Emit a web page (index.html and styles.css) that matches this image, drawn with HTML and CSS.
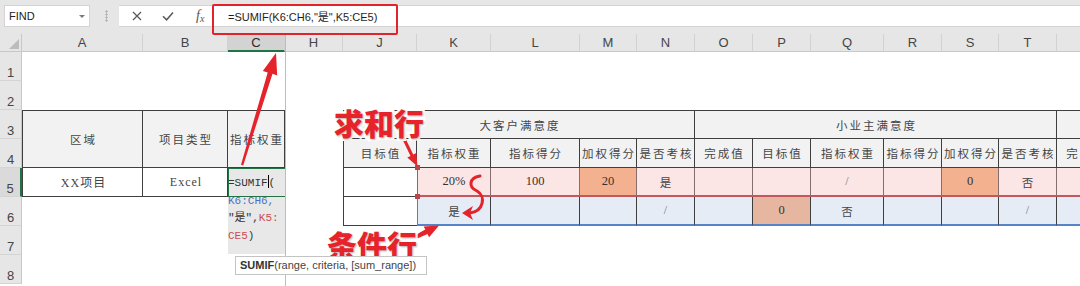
FILE: index.html
```html
<!DOCTYPE html>
<html lang="zh">
<head>
<meta charset="utf-8">
<title>SUMIF</title>
<link rel="stylesheet" href="styles.css">
</head>
<body>
<div class="app">
  <div class="fbar">
    <div class="namebox"><span>FIND</span><span class="dd"></span></div>
    <div class="grip"></div>
    <div class="finput">
      <svg class="ic-x" width="10" height="10" viewBox="0 0 10 10"><path d="M1 1L9 9M9 1L1 9" stroke="#5a5a5a" stroke-width="1.3" fill="none"/></svg>
      <svg class="ic-ok" width="12" height="10" viewBox="0 0 12 10"><path d="M1 5.2L4.6 8.8L11 1.4" fill="none" stroke="#5a5a5a" stroke-width="1.5"/></svg>
      <span class="fx">f<span class="fxx">x</span></span>
      <span class="ftext">=SUMIF(K6:CH6,"是",K5:CE5)</span>
    </div>
  </div>

  <div class="sheet">
    <div class="corner"></div>
    <div class="ch">A</div><div class="ch">B</div><div class="ch sel">C</div><div class="ch">H</div>
    <div class="ch">J</div><div class="ch">K</div><div class="ch">L</div><div class="ch">M</div>
    <div class="ch">N</div><div class="ch">O</div><div class="ch">P</div><div class="ch">Q</div>
    <div class="ch">R</div><div class="ch">S</div><div class="ch">T</div><div class="ch">U</div>

    <div class="rh">1</div><div class="blank full"></div>
    <div class="rh">2</div><div class="blank full"></div>

    <div class="rh">3</div>
    <div class="c hd tl bl r2">区域</div>
    <div class="c hd tl r2">项目类型</div>
    <div class="c hd tl r2">指标权重</div>
    <div class="blank r2"></div>
    <div class="c hd tl bl s5">大客户满意度</div>
    <div class="c hd tl s6">小业主满意度</div>
    <div class="c hd tl"></div>

    <div class="rh">4</div>
    <div class="c hd bl">目标值</div>
    <div class="c hd">指标权重</div>
    <div class="c hd">指标得分</div>
    <div class="c hd">加权得分</div>
    <div class="c hd">是否考核</div>
    <div class="c hd">完成值</div>
    <div class="c hd">目标值</div>
    <div class="c hd">指标权重</div>
    <div class="c hd">指标得分</div>
    <div class="c hd">加权得分</div>
    <div class="c hd">是否考核</div>
    <div class="c hd">完成值</div>

    <div class="rh sel">5</div>
    <div class="c bl lat">XX项目</div>
    <div class="c lat">Excel</div>
    <div class="edit r3">
      <div>=SUMIF<span class="caret"></span>(</div>
      <div class="blue">K6:CH6,</div>
      <div>"是",<span class="red">K5:</span></div>
      <div><span class="red">CE5</span>)</div>
    </div>
    <div class="blank"></div>
    <div class="c bl nr"></div>
    <div class="c pk first n">20%</div>
    <div class="c pk n">100</div>
    <div class="c pk or n">20</div>
    <div class="c pk">是</div>
    <div class="c pk"></div>
    <div class="c pk"></div>
    <div class="c pk sl">/</div>
    <div class="c pk"></div>
    <div class="c pk or n">0</div>
    <div class="c pk">否</div>
    <div class="c pk"></div>

    <div class="rh">6</div>
    <div class="blank"></div><div class="blank"></div>
    <div class="blank"></div>
    <div class="c bl nr"></div>
    <div class="c bu first">是</div>
    <div class="c bu"></div>
    <div class="c bu"></div>
    <div class="c bu sl">/</div>
    <div class="c bu"></div>
    <div class="c bu or2 n">0</div>
    <div class="c bu">否</div>
    <div class="c bu"></div>
    <div class="c bu"></div>
    <div class="c bu sl">/</div>
    <div class="c bu"></div>

    <div class="rh">7</div><div class="blank s2"></div><div class="blank s13"></div>
    <div class="rh">8</div><div class="blank full"></div>
  </div>

  <div class="freeze"></div>
  <div class="fbox"></div>

  <svg class="arrows" width="1080" height="286" viewBox="0 0 1080 286">
    <polygon fill="#e5232b" points="241,164.7 267.7,72.4 262.8,71 276,53 277.2,75.4 272.5,73.8 243.2,165.4"/>
    <polygon fill="#e5232b" points="401.7,137.7 410.5,155.9 407.3,157.4 417.5,166.5 416.3,153 413.2,154.5 404.4,136.3"/>
    <polygon fill="#e5232b" points="399.6,244.1 425.3,229.6 423.7,226.4 439,225.5 429.1,237.2 427.5,234 400.4,245.9"/>
    <path d="M480 176 C 469 178, 468 187, 477 191 C 486 196, 484 211, 470 213" fill="none" stroke="#e5232b" stroke-width="3" stroke-linecap="round"/>
    <polygon fill="#e5232b" points="462,213 473,206 470,213 473,220"/>
  </svg>

  <div class="lbl lbl-sum">求和行</div>
  <div class="lbl lbl-cond">条件行</div>
  <div class="tip"><b>SUMIF</b>(range, criteria, [sum_range])</div>
</div>
</body>
</html>
```

FILE: styles.css
```css
html, body {
  margin: 0;
  padding: 0;
  background: #fff;
}
body {
  width: 1080px;
  height: 286px;
  overflow: hidden;
  font-family: "Liberation Sans", "Noto Sans CJK SC", sans-serif;
}
.app {
  position: relative;
  width: 1080px;
  height: 286px;
  overflow: hidden;
}

/* formula bar */
.fbar {
  height: 34px;
  box-sizing: border-box;
  padding: 5px 0 0 4px;
  background: #e6e6e6;
  display: flex;
  align-items: flex-start;
}
.namebox {
  width: 86px;
  height: 22px;
  box-sizing: border-box;
  background: #fff;
  border: 1px solid #d4d4d4;
  display: flex;
  align-items: center;
  justify-content: space-between;
  padding: 0 4px 0 4px;
  font-size: 11px;
  color: #222;
}
.dd {
  width: 0;
  height: 0;
  border-left: 3px solid transparent;
  border-right: 3px solid transparent;
  border-top: 3px solid #7a7a7a;
}
.grip {
  width: 3px;
  height: 12px;
  margin: 5px 11px 0 15px;
  background: radial-gradient(circle, #a8a8a8 0.9px, transparent 1.2px) 0 0 / 3px 3px;
}
.finput {
  flex: 1;
  height: 22px;
  box-sizing: border-box;
  background: #fff;
  border-top: 1px solid #d4d4d4;
  border-bottom: 1px solid #d4d4d4;
  display: flex;
  align-items: center;
  padding-left: 13px;
}
.ic-ok {
  margin-left: 20px;
}
.fx {
  margin-left: 22px;
  font-family: "Liberation Serif", serif;
  font-style: italic;
  font-size: 14px;
  color: #555;
  width: 11px;
}
.fxx {
  font-size: 10px;
  position: relative;
  top: 2px;
}
.ftext {
  margin-left: 21px;
  font-size: 11px;
  color: #1e1e1e;
  white-space: nowrap;
}

/* sheet grid */
.sheet {
  display: grid;
  grid-template-columns: 22px 121px 85px 57px 58px 74px 74px 89px 57px 58px 58px 58px 73px 58px 57px 58px 58px;
  grid-template-rows: 18px repeat(8, 29px);
  width: 1115px;
}
.corner {
  box-sizing: border-box;
  background: #e6e6e6;
  border-right: 1px solid #c8c8c8;
  border-bottom: 1px solid #c8c8c8;
  display: flex;
  align-items: flex-end;
  justify-content: flex-end;
  padding: 0 2px 2px 0;
}
.corner::after {
  content: "";
  width: 0;
  height: 0;
  border-left: 10px solid transparent;
  border-bottom: 10px solid #bcbcbc;
}
.ch {
  box-sizing: border-box;
  background: #e6e6e6;
  border-right: 1px solid #d2d2d2;
  border-bottom: 1px solid #c8c8c8;
  display: flex;
  align-items: center;
  justify-content: center;
  font-size: 13px;
  color: #454545;
}
.ch.sel {
  background: #d3d3d3;
  border-bottom: 2px solid #217346;
  color: #2a2a2a;
}
.rh {
  grid-column: 1;
  box-sizing: border-box;
  background: #e6e6e6;
  border-right: 1px solid #c8c8c8;
  border-bottom: 1px solid #d4d4d4;
  display: flex;
  align-items: flex-end;
  justify-content: center;
  font-size: 13px;
  line-height: 15px;
  color: #454545;
}
.rh.sel {
  background: #dadada;
  border-right: 2px solid #217346;
}

.c {
  box-sizing: border-box;
  border-right: 1px solid #3f3f3f;
  border-bottom: 1px solid #3f3f3f;
  display: flex;
  align-items: center;
  justify-content: center;
  padding-left: 2px;
  font-family: "Noto Sans CJK SC", sans-serif;
  font-size: 11.5px;
  letter-spacing: 2px;
  color: #454545;
  white-space: nowrap;
  overflow: hidden;
}
.hd { background: #f2f2f2; }
.tl { border-top: 1px solid #3f3f3f; }
.bl { border-left: 1px solid #3f3f3f; }
.nr { border-right: none; }
.r2 { grid-row: span 2; }
.r3 { grid-row: span 3; }
.s2 { grid-column: span 2; }
.s5 { grid-column: span 5; }
.s6 { grid-column: span 6; }
.s13 { grid-column: span 13; }
.full { grid-column: span 16; }

.lat {
  font-family: "Liberation Serif", "Noto Sans CJK SC", serif;
  font-size: 12px;
  letter-spacing: 1px;
}
.n {
  font-family: "Liberation Serif", serif;
  font-size: 12.5px;
  letter-spacing: 0;
  padding-left: 0;
  color: #333;
}
.sl {
  font-family: "Liberation Serif", serif;
  color: #777;
  font-size: 12px;
}
.pk {
  background: #fbe5e5;
  border-right-color: #876e6e;
  border-bottom: 2px solid #c2585d;
}
.bu {
  background: #e6ecf6;
  border-bottom: 2px solid #5585c8;
}
.pk.first {
  position: relative;
  overflow: visible;
  border-left: 1px solid #c0504d;
}
.pk.first::before,
.pk.first::after {
  content: "";
  position: absolute;
  left: -3px;
  width: 5px;
  height: 5px;
  background: #b8474c;
}
.pk.first::before { top: -3px; }
.pk.first::after { bottom: -4px; }
.bu.first { border-left: 1px solid #4f81bd; }
.or { background: #f4b18f; }
.or2 { background: #e7b6a0; }

/* cell in edit mode */
.edit {
  position: relative;
  height: 86px;
  align-self: start;
  box-sizing: border-box;
  padding-top: 7px;
  background: #e8e8e8;
  font-family: "Liberation Mono", "Noto Sans CJK SC", monospace;
  font-size: 11px;
  line-height: 17.5px;
  color: #333;
  white-space: nowrap;
}
.edit::before {
  content: "";
  position: absolute;
  left: 0;
  top: 0;
  width: 58px;
  height: 29px;
  box-sizing: border-box;
  border: 1px solid #217346;
}
.caret {
  display: inline-block;
  width: 1px;
  height: 13px;
  background: #000;
  vertical-align: -2px;
}
.blue { color: #4a72c4; }
.red { color: #cc4c4f; }

/* overlays */
.freeze {
  position: absolute;
  left: 285px;
  top: 34px;
  width: 1px;
  height: 252px;
  background: #bdbdbd;
}
.fbox {
  position: absolute;
  left: 212px;
  top: 4px;
  width: 186px;
  height: 31px;
  box-sizing: border-box;
  border: 2px solid #e2232c;
  border-radius: 2px;
}
.arrows {
  position: absolute;
  left: 0;
  top: 0;
  pointer-events: none;
}
.lbl {
  position: absolute;
  font-family: "Noto Sans CJK SC", sans-serif;
  font-weight: 900;
  font-size: 30px;
  line-height: 30px;
  color: #e8222a;
  -webkit-text-stroke: 5px #fff;
  paint-order: stroke fill;
  text-shadow: 1px 1px 2px rgba(0, 0, 0, 0.3);
  white-space: nowrap;
}
.lbl-sum {
  left: 334px;
  top: 107px;
}
.lbl-cond {
  left: 327px;
  top: 229px;
}
.tip {
  position: absolute;
  left: 235px;
  top: 256px;
  width: 192px;
  height: 19px;
  box-sizing: border-box;
  padding: 0 4px;
  background: #fff;
  border: 1px solid #c4c4c4;
  font-size: 11px;
  line-height: 17px;
  color: #444;
  white-space: nowrap;
}
.tip b {
  color: #333;
}
```
